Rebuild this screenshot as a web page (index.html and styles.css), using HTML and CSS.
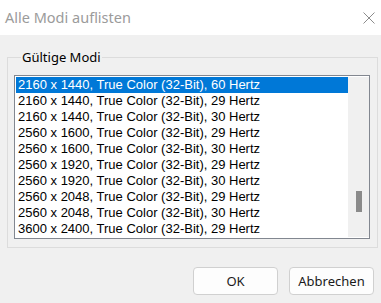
FILE: index.html
```html
<!DOCTYPE html>
<html lang="de">
<head>
<meta charset="utf-8">
<title>Alle Modi auflisten</title>
<link rel="stylesheet" href="styles.css">
</head>
<body>
<div class="dialog">
  <header class="titlebar">
    <span class="title">Alle Modi auflisten</span>
    <svg class="close" width="12" height="12" viewBox="0 0 12 12" aria-hidden="true">
      <path d="M0.5 0.5 L11.5 11.5 M11.5 0.5 L0.5 11.5" stroke="#8c8c8c" stroke-width="1" fill="none"/>
    </svg>
  </header>
  <main class="body">
    <fieldset class="group">
      <legend class="legend">Gültige Modi</legend>
      <div class="listbox">
        <ul class="items">
          <li class="item selected">2160 x 1440, True Color (32-Bit), 60 Hertz</li>
          <li class="item">2160 x 1440, True Color (32-Bit), 29 Hertz</li>
          <li class="item">2160 x 1440, True Color (32-Bit), 30 Hertz</li>
          <li class="item">2560 x 1600, True Color (32-Bit), 29 Hertz</li>
          <li class="item">2560 x 1600, True Color (32-Bit), 30 Hertz</li>
          <li class="item">2560 x 1920, True Color (32-Bit), 29 Hertz</li>
          <li class="item">2560 x 1920, True Color (32-Bit), 30 Hertz</li>
          <li class="item">2560 x 2048, True Color (32-Bit), 29 Hertz</li>
          <li class="item">2560 x 2048, True Color (32-Bit), 30 Hertz</li>
          <li class="item">3600 x 2400, True Color (32-Bit), 29 Hertz</li>
        </ul>
        <div class="scrollbar"><div class="thumb"></div></div>
      </div>
    </fieldset>
    <div class="buttons">
      <button class="btn" type="button">OK</button>
      <button class="btn" type="button">Abbrechen</button>
    </div>
  </main>
</div>
</body>
</html>
```

FILE: styles.css
```css
html, body {
  margin: 0;
  padding: 0;
}
body {
  width: 381px;
  height: 303px;
  background: #f0f0f0;
  font-family: "Segoe UI", "Noto Sans", "Open Sans", sans-serif;
  overflow: hidden;
}
.dialog {
  display: flex;
  flex-direction: column;
  height: 303px;
}
.titlebar {
  height: 35px;
  background: #ffffff;
  display: flex;
  align-items: center;
  justify-content: space-between;
  padding: 0 6px 0 5px;
  box-sizing: border-box;
}
.title {
  font-size: 14.5px;
  color: #9b9b9b;
  margin-top: -1px;
}
.close {
  display: block;
  margin-top: 1px;
}
.body {
  flex: 1;
  display: flex;
  flex-direction: column;
  padding: 14px 4px 0 7px;
}
.group {
  margin: 0;
  width: 371px;
  box-sizing: border-box;
  border: 1px solid #dcdcdc;
  padding: 9px 7px 8px 6px;
  min-width: 0;
}
.legend {
  font-size: 13px;
  color: #000;
  padding: 0 1px;
  margin-left: 7px;
  line-height: 17px;
}
.listbox {
  display: flex;
  width: 356px;
  box-sizing: border-box;
  border: 1px solid #828790;
  background: #ffffff;
  padding: 1px 0 1px 1px;
}
.items {
  list-style: none;
  margin: 0;
  padding: 0;
  flex: 1;
}
.item {
  height: 16px;
  line-height: 16px;
  padding-left: 2px;
  font-family: "Liberation Sans", Arial, sans-serif;
  font-size: 13px;
  color: #000;
  white-space: nowrap;
}
.item.selected {
  background: #0078d7;
  color: #ffffff;
}
.scrollbar {
  width: 21px;
  background: #f0f0f0;
  display: flex;
  justify-content: center;
  padding-top: 114px;
  box-sizing: border-box;
}
.thumb {
  width: 6px;
  height: 21px;
  background: #8a8a8a;
}
.buttons {
  display: flex;
  justify-content: flex-end;
  gap: 11px;
  margin-top: 19px;
  padding-right: 3px;
}
.btn {
  height: 28px;
  width: 85px;
  background: #fdfdfd;
  border: 1px solid #d0d0d0;
  border-radius: 4px;
  font-family: "Segoe UI", "Noto Sans", "Open Sans", sans-serif;
  font-size: 13px;
  color: #1a1a1a;
  padding: 0;
}
```
